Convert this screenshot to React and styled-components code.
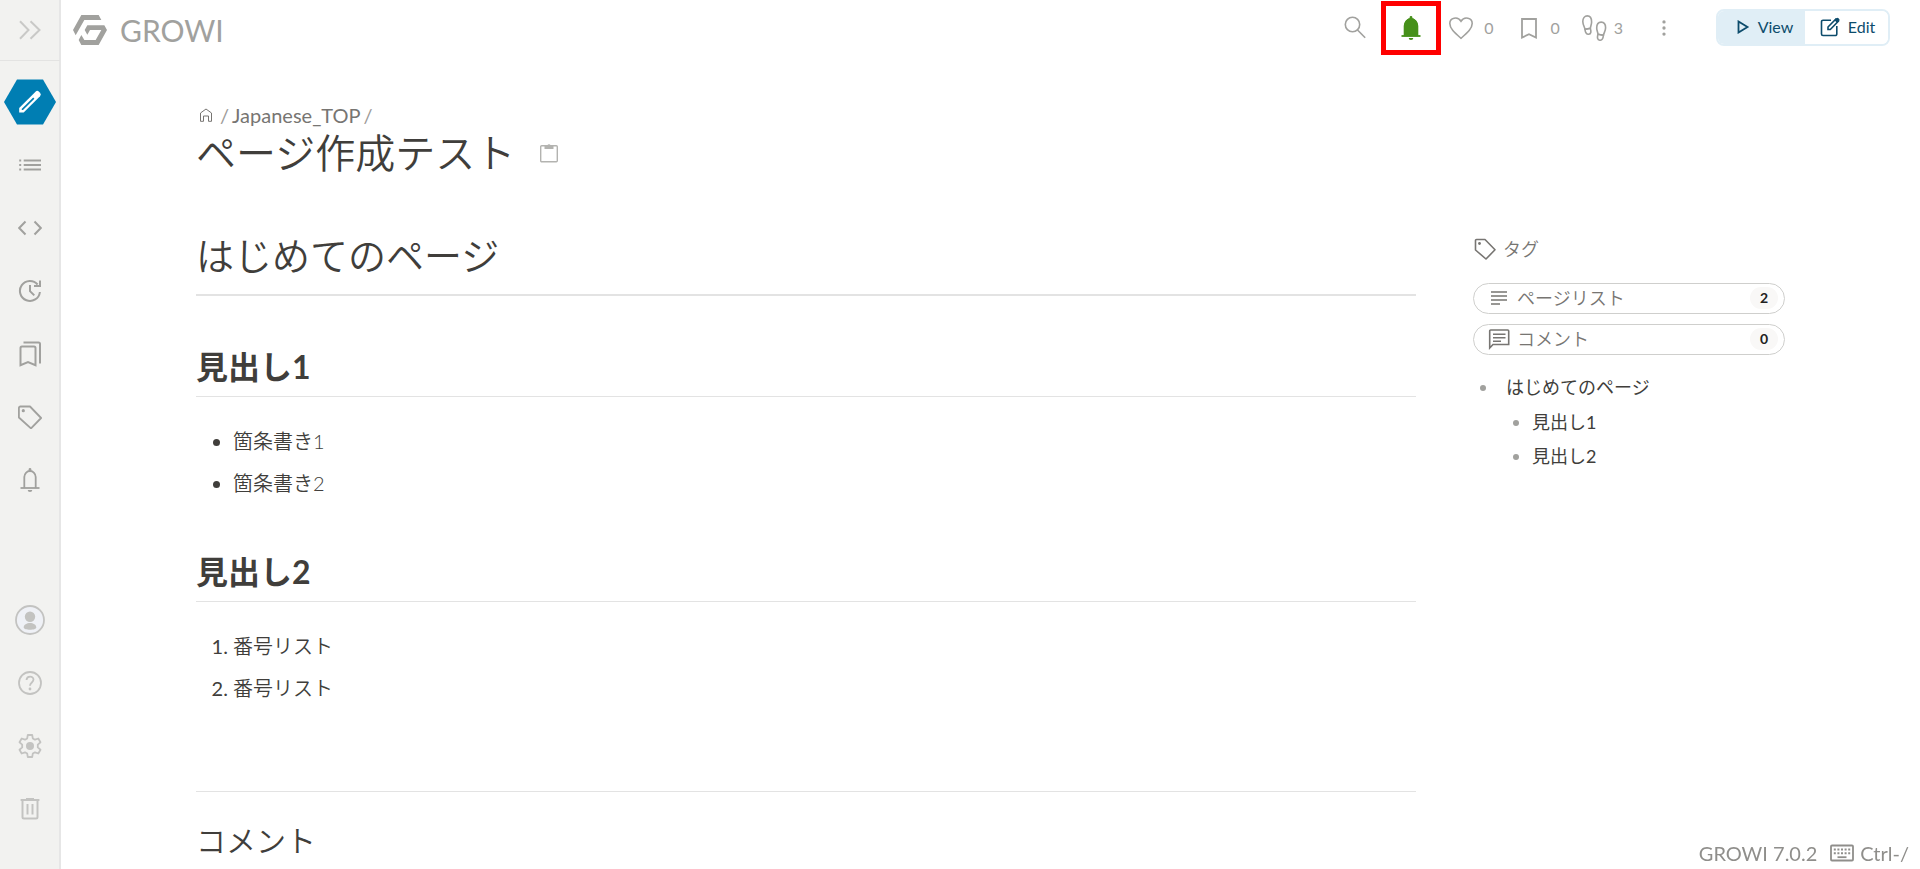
import React from "react";
import styled, { createGlobalStyle } from "styled-components";

const GlobalStyle = createGlobalStyle`
  *, *::before, *::after { box-sizing: border-box; }
  body {
    margin: 0;
    background: #fff;
    color: #403e3b;
    font-family: Lato, "Noto Sans CJK JP", sans-serif;
    font-size: 20px;
    line-height: 30px;
  }
  button { font-family: inherit; cursor: pointer; }
  a { color: inherit; text-decoration: none; }
`;

const Layout = styled.div`
  display: flex;
  min-height: 100vh;
`;

const Sidebar = styled.nav`
  position: sticky;
  top: 0;
  display: flex;
  flex: none;
  flex-direction: column;
  width: 61px;
  height: 100vh;
  padding-bottom: 29px;
  background: #f2f2f0;
  border-right: 2px solid #e6e6e6;
`;

const IconButton = styled.button`
  display: flex;
  flex: none;
  align-items: center;
  justify-content: center;
  width: ${(p) => p.$width || "auto"};
  height: ${(p) => p.$height || "32px"};
  padding: 0;
  border: 0;
  background: none;
  color: ${(p) => p.$color || "#a1a19e"};
`;

const SidebarToggle = styled(IconButton)`
  width: 60px;
  height: 61px;
  padding-bottom: 1px;
  border-bottom: 1px solid #e3e3e2;
`;

const CreateButton = styled(IconButton)`
  width: 60px;
  height: 63px;
  margin-top: 9px;
`;

const NavList = styled.ul`
  display: flex;
  flex-direction: column;
  margin: ${(p) => (p.$bottom ? "auto 0 0" : "0")};
  padding: 0;
  list-style: none;
`;

const Page = styled.div`
  display: flex;
  flex: 1;
  flex-direction: column;
  min-width: 0;
`;

const TopBar = styled.header`
  display: flex;
  align-items: center;
  justify-content: space-between;
  height: 55px;
  padding: 0 30px 0 12px;
`;

const Brand = styled.a`
  display: flex;
  align-items: center;
  gap: 13px;
  padding-top: 5px;
  color: #a1a19e;
  font-size: 30px;
  line-height: 40px;
`;

const Tools = styled.div`
  display: flex;
  align-items: center;
`;

const Bell = styled(IconButton)`
  position: relative;
  width: 24px;
  margin: 0 26px 0 32px;
  &::after {
    content: "";
    position: absolute;
    inset: -11px -18px -11px -18px;
    border: 5px solid #f00;
    pointer-events: none;
  }
`;

const Counter = styled(IconButton)`
  gap: ${(p) => p.$gap};
  margin-right: ${(p) => p.$after};
  font-size: 16px;
  line-height: 24px;
`;

const ModeSwitch = styled.div`
  display: flex;
  width: 174px;
  height: 37px;
  margin-left: 42px;
  overflow: hidden;
  border: 2px solid #e0eef6;
  border-radius: 8px;
`;

const ModeButton = styled.button`
  display: flex;
  flex: ${(p) => (p.$active ? "0 0 87px" : "1")};
  align-items: center;
  justify-content: center;
  gap: 8px;
  padding: ${(p) => (p.$active ? "0 0 2px 6px" : "0 0 2px 2px")};
  border: 0;
  background: ${(p) => (p.$active ? "#e0eef6" : "#fff")};
  color: #0d4c6c;
  font-size: 16px;
  line-height: 24px;
`;

const Content = styled.main`
  padding: 48px 135px 8px;
`;

const Breadcrumb = styled.nav`
  display: flex;
  align-items: center;
  gap: 3px;
  padding-left: 3px;
  color: #777572;
  line-height: 24px;
`;

const HomeLink = styled.a`
  display: flex;
  margin-right: 4px;
`;

const Slash = styled.span`
  color: #9c9a97;
`;

const TitleRow = styled.div`
  display: flex;
  align-items: center;
  gap: 24px;
  margin: 2px 0 54px;
`;

const Title = styled.h1`
  margin: 0;
  font-size: 40px;
  font-weight: 350;
  line-height: 48px;
`;

const Columns = styled.div`
  display: flex;
  align-items: flex-start;
  gap: 57px;
`;

const Article = styled.article`
  flex: 1;
  min-width: 0;
`;

const Heading1 = styled.h1`
  margin: 0 0 51px;
  padding-bottom: 15px;
  border-bottom: 2px solid #e3e3e3;
  font-size: 38px;
  font-weight: 350;
  line-height: 48px;
`;

const Heading2 = styled.h2`
  margin: 0 0 29px;
  padding-bottom: 9px;
  border-bottom: 1px solid #e3e3e3;
  font-size: 32px;
  font-weight: 700;
  line-height: 40px;
`;

const TextList = styled.ul`
  display: flex;
  flex-direction: column;
  gap: 12px;
  margin: 0 0 54px;
  padding-left: 37px;
  font-weight: 350;
  & > li::marker { font-weight: 400; }
`;

const Comments = styled.section`
  margin-top: 88px;
  padding-top: 28px;
  border-top: 1px solid #e3e3e3;
`;

const CommentsTitle = styled.h2`
  margin: 0;
  font-size: 30px;
  font-weight: 350;
  line-height: 40px;
`;

const Aside = styled.aside`
  flex: 0 0 312px;
  padding-top: 6px;
  font-size: 18px;
  line-height: 24px;
`;

const TagButton = styled.button`
  display: flex;
  align-items: center;
  gap: 7px;
  margin-bottom: 22px;
  padding: 0 0 0 1px;
  border: 0;
  background: none;
  color: #777572;
  font-size: 18px;
  font-weight: 350;
  line-height: 24px;
`;

const PillButton = styled.button`
  display: flex;
  align-items: center;
  gap: 7px;
  width: 100%;
  height: 31px;
  margin-bottom: 10px;
  padding: 0 6px 2px 14px;
  border: 1px solid #cfcfcd;
  border-radius: 16px;
  background: #fff;
  color: #777572;
  font-size: 18px;
  font-weight: 350;
  line-height: 24px;
`;

const Badge = styled.span`
  width: 28px;
  margin-left: auto;
  border-radius: 11px;
  background: #f9f8f7;
  color: #222;
  font-size: 14px;
  font-weight: 700;
  line-height: 22px;
  text-align: center;
`;

const Toc = styled.ul`
  margin: ${(p) => (p.$nested ? "11px 0 0" : "20px 0 0")};
  padding-left: 26px;
  list-style: disc;
  & > li { padding-left: ${(p) => (p.$nested ? "0" : "7px")}; }
  & > li + li { margin-top: 10px; }
  & > li::marker { color: #a1a19e; }
`;

const PageFooter = styled.footer`
  position: fixed;
  right: 11px;
  bottom: 1px;
  display: flex;
  align-items: center;
  gap: 13px;
  color: #8f8e8b;
  line-height: 30px;
`;

const Shortcut = styled.button`
  display: flex;
  align-items: center;
  gap: 6px;
  padding: 0;
  border: 0;
  background: none;
  color: inherit;
  font-size: 20px;
  line-height: 30px;
`;

function Icon({ size = 24, w = 1.8, children }) {
  return (
    <svg
      width={size}
      height={size}
      viewBox={`0 0 ${size} ${size}`}
      fill="none"
      stroke="currentColor"
      strokeWidth={w}
      aria-hidden="true"
    >
      {children}
    </svg>
  );
}

const BellIcon = ({ filled }) => (
  <Icon>
    <path d="M6.3 20V9a5.7 6 0 0 1 11.4 0v11" fill={filled ? "currentColor" : "none"} />
    {filled && <path d="M6 10a6 6.500 0 0 1 12 0v9H6Z" fill="currentColor" strokeWidth="2.6" />}
    <path d="M2.500 20h19" />
    <path
      d="M10.600 3.400V1.500a1.400 1.400 0 0 1 2.800 0v1.900ZM9.700 22h4.600a2.300 2 0 0 1-4.600 0Z"
      fill="currentColor"
      stroke="none"
    />
  </Icon>
);

const navItems = [
  ["ページツリー", <Icon><path d="M5.700 7.500H23M5.700 12H23M5.700 16.500H23M1.200 7.500h2M1.200 12h2M1.200 16.500h2" /></Icon>],
  ["カスタムサイドバー", <Icon w={2}><path d="M7.500 5.500 1.200 12l6.300 6.500M16.500 5.500l6.300 6.500-6.300 6.500" /></Icon>],
  ["最近の変更", <Icon w={2}><path d="M21.900 13A10 10 0 1 1 19.600 5.500M22 1.500v5.500h-6" /><path d="M12 6v6.200l4.300 4.200" /></Icon>],
  ["ブックマーク", <Icon size={26} w={2}><path d="M3.500 24.200V7A1.500 1.500 0 0 1 5 5.500h12A1.500 1.500 0 0 1 18.500 7v17.200L11 21ZM6.500 1.500h15A1.500 1.500 0 0 1 23 3v19.500" /></Icon>],
  ["タグ", <Icon><path d="M.9 12.500V3A1.500 1.500 0 0 1 2.400 1.500H12L23.100 13 13 23.400Z" strokeLinejoin="round" /><circle cx="5.300" cy="5.700" r="1.600" fill="currentColor" stroke="none" /></Icon>],
  ["通知", <BellIcon />],
];

const bottomItems = [
  ["ユーザー", <Icon size={30}><circle cx="15" cy="15" r="14" fill="#eff1f6" /><circle cx="15" cy="11.700" r="5.200" fill="currentColor" stroke="none" /><path d="M8.700 22.500c0-6 12.600-6 12.600 0 0 3-12.600 3-12.600 0Z" fill="currentColor" stroke="none" /></Icon>],
  ["ヘルプ", <Icon><circle cx="12" cy="12" r="11" /><path d="M8.500 9c.3-4.600 7-4.400 7-.4 0 2.900-3.500 3-3.500 6.200" /><circle cx="12" cy="18" r="1.400" fill="currentColor" stroke="none" /></Icon>],
  ["設定", <Icon><path d="M9.800 1h4.400l.6 3.400 2.200 1.300 3.300-1.200 2.200 3.800-2.700 2.300v2.800l2.700 2.300-2.200 3.800-3.300-1.200-2.200 1.300-.6 3.400H9.800l-.6-3.400L7 18.300l-3.300 1.200-2.200-3.800 2.700-2.300v-2.800L1.500 8.300l2.200-3.800L7 5.700l2.200-1.300Z" strokeLinejoin="round" /><circle cx="12" cy="12" r="4" fill="currentColor" stroke="none" /></Icon>],
  ["ゴミ箱", <Icon w={2}><path d="M4.500 3.400V20A1.500 1.500 0 0 0 6 21.500h12a1.500 1.500 0 0 0 1.500-1.500V3.400M2.600 3h18.800M8 2h8M9.500 7v10.500M14.500 7v10.500" /></Icon>],
];

export default function App() {
  return (
    <>
      <GlobalStyle />
      <Layout>
        <Sidebar>
          <SidebarToggle $color="#c9c9c7" aria-label="サイドバーを開く">
            <Icon w={2}><path d="m2 3.200 8.500 8.800L2 20.800M12.500 3.200 21.500 12l-9 8.800" /></Icon>
          </SidebarToggle>
          <CreateButton aria-label="新規作成">
            <svg width="52" height="46" viewBox="0 0 52 46" aria-hidden="true">
              <path d="M13 .5h26L52 23 39 45.500H13L0 23Z" fill="#007eb3" />
              <path d="M15.200 33.500V29L31.500 12.700a2.500 2.500 0 0 1 3.500 0l1 1a2.500 2.500 0 0 1 0 3.500L19.700 33.500Z" fill="#fff" />
              <path d="m17.700 31 .2-1.200L29.200 18.500l1.200 1.200L19 31Z" fill="#007eb3" />
            </svg>
          </CreateButton>
          <NavList>
            {navItems.map(([label, icon]) => (
              <li key={label}>
                <IconButton $width="60px" $height="63px" aria-label={label}>{icon}</IconButton>
              </li>
            ))}
          </NavList>
          <NavList $bottom>
            {bottomItems.map(([label, icon]) => (
              <li key={label}>
                <IconButton $width="60px" $height="63px" $color="#c3c3c1" aria-label={label}>{icon}</IconButton>
              </li>
            ))}
          </NavList>
        </Sidebar>

        <Page>
          <TopBar>
            <Brand href="#">
              <svg width="34" height="30" viewBox="0 0 102 90" fill="currentColor" aria-hidden="true">
                <path d="M25 0h52l8 15H34L8 61 0 45Z" />
                <path d="M43 31h51l8 14-25 45H25l-8-15 8-15 9 15h34l17-30H51l-8 14-8-14Z" />
              </svg>
              GROWI
            </Brand>
            <Tools>
              <IconButton aria-label="検索">
                <Icon w={1.600}><circle cx="9.500" cy="8.500" r="7.200" /><path d="m14.500 14 7.700 7.700" /></Icon>
              </IconButton>
              <Bell $color="#46901a" aria-label="購読中"><BellIcon filled /></Bell>
              <Counter $gap="11px" $after="24px" aria-label="いいね">
                <Icon w={1.600}><path d="M12 22.300C6 17 .8 12.700.8 7.500.8 2 8.500-.2 12 5.200 15.500-.2 23.200 2 23.200 7.500c0 5.200-5.200 9.500-11.200 14.800Z" /></Icon>
                0
              </Counter>
              <Counter $gap="9px" $after="21px" aria-label="ブックマーク数">
                <Icon><path d="M5 21.500V3h14v18.500l-7-3.200Z" /></Icon>
                0
              </Counter>
              <Counter $gap="7px" $after="31px" aria-label="閲覧者数">
                <Icon size={26} w={1.600}>
                  <path d="M6.300.9C9 .9 10.600 3.500 10.600 7c0 2.500-1 4-1.300 6.300L4 14.300C3.600 12 1.800 9.600 1.800 6.500 1.800 3.300 3.700.9 6.300.9Z" />
                  <path d="M4 14.300 9.300 13.300c1 3.500.8 5.600-1.600 5.900-2.200.3-3.500-1.700-3.700-4.900Z" />
                  <path d="M20.200 7.100c2.700 0 4.400 2.300 4.400 5.700 0 3-1.700 5.200-2.200 7.500L17 19.200c-.2-2.200-1.300-3.800-1.300-6.200 0-3.500 1.700-5.900 4.500-5.900Z" />
                  <path d="m17 19.200 5.400 1.100c-.2 3.300-1.500 5.200-3.700 4.900-2.300-.4-2.700-2.600-1.700-6Z" />
                </Icon>
                3
              </Counter>
              <IconButton $width="20px" aria-label="メニュー">
                <Icon>
                  <g fill="currentColor" stroke="none">
                    <circle cx="12" cy="4.700" r="2" />
                    <circle cx="12" cy="12" r="2" />
                    <circle cx="12" cy="19.300" r="2" />
                  </g>
                </Icon>
              </IconButton>
              <ModeSwitch>
                <ModeButton $active>
                  <Icon size={14}><path d="M2.500 1.500v11L11.500 7Z" /></Icon>
                  View
                </ModeButton>
                <ModeButton>
                  <Icon size={20} w={1.600}>
                    <path d="M11 3.200H3a1.500 1.500 0 0 0-1.500 1.500V17A1.500 1.500 0 0 0 3 18.500h12.300a1.500 1.500 0 0 0 1.500-1.500V9" />
                    <path d="M8 12.500V10L16 2l2.300 2.300-8 8.200Z" />
                    <path d="m14.500 3.300 2-2a1.400 1.400 0 0 1 2 0l.6.600a1.400 1.400 0 0 1 0 2l-2 2Z" fill="currentColor" stroke="none" />
                  </Icon>
                  Edit
                </ModeButton>
              </ModeSwitch>
            </Tools>
          </TopBar>

          <Content>
            <Breadcrumb>
              <HomeLink href="#" aria-label="ホーム">
                <Icon size={14} w={1}><path d="M1.500 13V5L7 1l5.500 4v8.300h-3V8h-5v5.300h-3Z" /></Icon>
              </HomeLink>
              <Slash>/</Slash>
              <a href="#">Japanese_TOP</a>
              <Slash>/</Slash>
            </Breadcrumb>
            <TitleRow>
              <Title>ページ作成テスト</Title>
              <IconButton $color="#b3b3b0" aria-label="コピー">
                <Icon size={20} w={1.400}>
                  <rect x="1.700" y="2.700" width="16.600" height="16" rx="1" />
                  <path d="M5.500 2.500h2.800a1.800 1.800 0 0 1 3.400 0h2.800V6h-9Z" fill="currentColor" stroke="none" />
                </Icon>
              </IconButton>
            </TitleRow>
            <Columns>
              <Article>
                <Heading1>はじめてのページ</Heading1>
                <Heading2>見出し1</Heading2>
                <TextList>
                  <li>箇条書き1</li>
                  <li>箇条書き2</li>
                </TextList>
                <Heading2>見出し2</Heading2>
                <TextList as="ol">
                  <li>番号リスト</li>
                  <li>番号リスト</li>
                </TextList>
                <Comments>
                  <CommentsTitle>コメント</CommentsTitle>
                </Comments>
              </Article>
              <Aside>
                <TagButton>
                  <Icon size={22} w={1.600}>
                    <path d="M1.500 12V2.500a1 1 0 0 1 1-1H11L21 11.800 12 21Z" strokeLinejoin="round" />
                    <circle cx="5.500" cy="5.500" r="1.400" fill="currentColor" stroke="none" />
                  </Icon>
                  タグ
                </TagButton>
                <PillButton>
                  <Icon size={22} w={1.600}><path d="M3 5h16M3 9h16M3 13h16M3 17h9" /></Icon>
                  ページリスト<Badge>2</Badge>
                </PillButton>
                <PillButton>
                  <Icon size={22} w={1.600}>
                    <path d="M1.700 20V3a1 1 0 0 1 1-1h17a1 1 0 0 1 1 1v13.500H5Z" />
                    <path d="M5 6.200h12.500M5 9.700h12.500M5 13.200h8" />
                  </Icon>
                  コメント<Badge>0</Badge>
                </PillButton>
                <Toc>
                  <li>
                    <a href="#">はじめてのページ</a>
                    <Toc $nested>
                      <li><a href="#">見出し1</a></li>
                      <li><a href="#">見出し2</a></li>
                    </Toc>
                  </li>
                </Toc>
              </Aside>
            </Columns>
          </Content>
        </Page>
      </Layout>
      <PageFooter>
        <span>GROWI 7.0.2</span>
        <Shortcut>
          <Icon>
            <rect x="1" y="4.500" width="22" height="15" rx="1" />
            <path d="M3.800 8.500h16.500M3.800 12.300h16.500" strokeWidth="2" strokeDasharray="2 1.600" />
            <path d="M7.500 16.200h9" />
          </Icon>
          Ctrl-/
        </Shortcut>
      </PageFooter>
    </>
  );
}
